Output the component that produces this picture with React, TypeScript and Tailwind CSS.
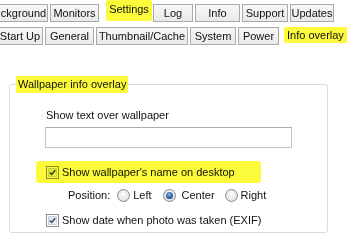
import React from "react";

function Tab({ label, className }: { label: string; className: string }) {
  return (
    <div
      className={
        "h-[18px] shrink-0 flex items-center justify-center border border-[#a9a9a9] bg-[linear-gradient(#f7f7f7,#e9e9e9)] leading-[13px] whitespace-nowrap " +
        className
      }
    >
      {label}
    </div>
  );
}

function CheckBox() {
  return (
    <div className="w-[13px] h-[13px] shrink-0 border border-[#8e8f8f] bg-white p-[1px]">
      <div className="w-full h-full border border-[#d0d4da] bg-[linear-gradient(135deg,#dcdfe4,#f6f6f6)] flex items-center justify-center">
        <svg width="9" height="9" viewBox="0 0 9 9">
          <path d="M1 4.5 L3.5 7 L8 1.5" fill="none" stroke="#34487a" strokeWidth="2" />
        </svg>
      </div>
    </div>
  );
}

function Radio({ checked }: { checked?: boolean }) {
  return (
    <div className="w-[13px] h-[13px] shrink-0 rounded-full border border-[#8a8a8a] bg-[radial-gradient(circle_at_50%_40%,#fdfdfd,#d6d6d6)] flex items-center justify-center">
      {checked && (
        <div className="w-[7px] h-[7px] rounded-full bg-[radial-gradient(circle_at_45%_35%,#7fb6ea,#1a4f92_70%)]" />
      )}
    </div>
  );
}

export default function App() {
  return (
    <div className="w-[347px] h-[242px] overflow-hidden bg-white text-[11px] text-[#111] font-['Liberation_Sans',Arial,sans-serif] relative">
      {/* Top tab row */}
      <div className="flex items-start pt-[4px] ml-[-3px] h-[22px]">
        <Tab label="ckground" className="w-[51px] pl-[2px]" />
        <Tab label="Monitors" className="w-[49px] ml-[2px]" />
        <div className="w-[46px] h-[21px] -mt-[4px] ml-[7px] shrink-0 bg-[#fbfb3c] rounded-[2px] flex items-center justify-center leading-[13px] pb-[3px]">
          Settings
        </div>
        <Tab label="Log" className="w-[40px] ml-[1px]" />
        <Tab label="Info" className="w-[45px] ml-[2px]" />
        <Tab label="Support" className="w-[46px] ml-[2px]" />
        <Tab label="Updates" className="w-[44px] ml-[2px]" />
      </div>
      {/* Second tab row */}
      <div className="flex items-start mt-[5px] ml-[-3px] h-[18px]">
        <Tab label="Start Up" className="w-[46px]" />
        <Tab label="General" className="w-[49px] ml-[2px]" />
        <Tab label="Thumbnail/Cache" className="w-[92px] ml-[2px]" />
        <Tab label="System" className="w-[46px] ml-[2px]" />
        <Tab label="Power" className="w-[41px] ml-[2px]" />
        <div className="w-[70px] h-[16px] ml-[5px] shrink-0 bg-[#fbfb3c] rounded-[2px] flex items-center pl-[3px] leading-[13px] whitespace-nowrap">
          Info overlay
        </div>
      </div>

      {/* Group box */}
      <fieldset className="mt-[31px] ml-[9px] w-[319px] h-[157px] border border-[#d5dce3] rounded-[3px] min-w-0">
        <legend className="ml-[6px] px-[2px] py-[2px] leading-[13px] bg-[#fbfb3c] rounded-[2px]">
          Wallpaper info overlay
        </legend>
        <div className="pl-[36px] flex flex-col items-start">
          <div className="mt-[16px] leading-[13px]">Show text over wallpaper</div>
          <div className="mt-[5px] -ml-[1px] w-[247px] h-[21px] border border-[#c2c4c8] border-t-[#a9abb0] bg-white" />

          <div className="relative mt-[18px] flex items-center h-[13px]">
            <CheckBox />
            <span className="ml-[3px] leading-[13px] whitespace-nowrap">Show wallpaper's name on desktop</span>
            <div className="absolute left-[-10px] top-[-5px] w-[225px] h-[22px] bg-[#fbfb3c] mix-blend-multiply rounded-[3px]" />
          </div>

          <div className="mt-[10px] ml-[22px] flex items-center h-[13px] leading-[13px] whitespace-nowrap">
            <span>Position:</span>
            <div className="ml-[7px]"><Radio /></div>
            <span className="ml-[3px]">Left</span>
            <div className="ml-[11px]"><Radio checked /></div>
            <span className="ml-[6px]">Center</span>
            <div className="ml-[10px]"><Radio /></div>
            <span className="ml-[3px]">Right</span>
          </div>

          <div className="mt-[12px] flex items-center h-[13px]">
            <CheckBox />
            <span className="ml-[3px] leading-[13px] whitespace-nowrap">Show date when photo was taken (EXIF)</span>
          </div>
        </div>
      </fieldset>
    </div>
  );
}
